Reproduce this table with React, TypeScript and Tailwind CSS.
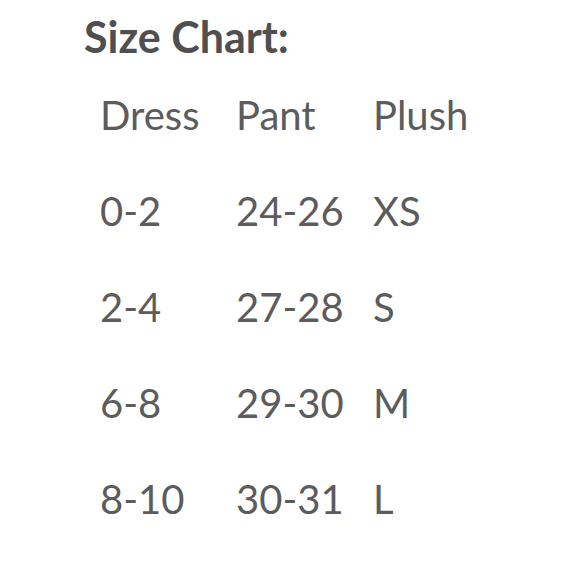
import React from "react";

const rows = [
  ["Dress", "Pant", "Plush"],
  ["0-2", "24-26", "XS"],
  ["2-4", "27-28", "S"],
  ["6-8", "29-30", "M"],
  ["8-10", "30-31", "L"],
];

export default function App() {
  return (
    <div
      className="w-[580px] h-[580px] bg-white text-[#5c5c5c] overflow-hidden"
      style={{ fontFamily: "Lato, 'Liberation Sans', sans-serif" }}
    >
      <div className="pl-[84px] pt-[12px]">
        <div className="text-[43px] font-bold leading-[50px] text-[#4f4f4f]">Size Chart:</div>
      </div>
      <div className="pl-[100px] pt-[5px] grid grid-cols-[136px_137px_1fr]">
        {rows.map((r, i) =>
          r.map((c, j) => (
            <div key={`${i}-${j}`} className="h-[96px] text-[40px] leading-[96px]">
              {c}
            </div>
          ))
        )}
      </div>
    </div>
  );
}
